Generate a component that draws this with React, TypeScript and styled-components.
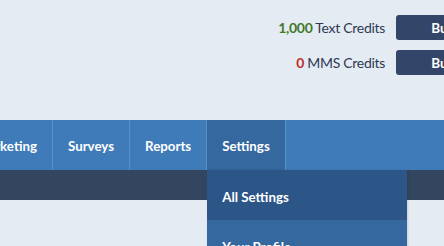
import React from 'react';
import styled, { createGlobalStyle } from 'styled-components';

const GlobalStyle = createGlobalStyle`
  html, body {
    margin: 0;
    padding: 0;
    background: #e5ebf2;
    overflow: hidden;
  }
  body {
    font-family: Lato, 'Open Sans', 'Liberation Sans', sans-serif;
  }
`;

const tabs = ['Marketing', 'Surveys', 'Reports', 'Settings'];
const settingsMenu = ['All Settings', 'Your Profile', 'Billing'];

const App: React.FC = () => {
  return (
    <Page>
      <GlobalStyle />
      <StyledHeader>
        <StyledCreditRow>
          <StyledCreditLabel>
            <StyledAmount color="#3f7a2c">1,000</StyledAmount> Text Credits
          </StyledCreditLabel>
          <StyledBuyButton>Buy Credits</StyledBuyButton>
        </StyledCreditRow>
        <StyledCreditRow>
          <StyledCreditLabel>
            <StyledAmount color="#c0302a">0</StyledAmount> MMS Credits
          </StyledCreditLabel>
          <StyledBuyButton>Buy Credits</StyledBuyButton>
        </StyledCreditRow>
      </StyledHeader>
      <StyledNav>
        <StyledTabList>
          {tabs.map((tab) => (
            <StyledTab key={tab} active={tab === 'Settings'}>
              {tab}
              {tab === 'Settings' ? (
                <StyledDropdown>
                  {settingsMenu.map((item, i) => (
                    <StyledDropdownItem key={item} active={i === 0}>
                      {item}
                    </StyledDropdownItem>
                  ))}
                </StyledDropdown>
              ) : null}
            </StyledTab>
          ))}
        </StyledTabList>
      </StyledNav>
      <StyledSubBar />
    </Page>
  );
};

const Page = styled.div`
  width: 520px;
  height: 246px;
`;

const StyledHeader = styled.div`
  height: 120px;
  box-sizing: border-box;
  padding: 15px 0 0 0;
  display: flex;
  flex-direction: column;
  gap: 10px;
`;

const StyledCreditRow = styled.div`
  display: flex;
  align-items: center;
  justify-content: flex-end;
  gap: 11px;
  width: 536px;
`;

const StyledCreditLabel = styled.div`
  font-size: 14px;
  letter-spacing: -0.3px;
  color: #2d3a52;
  white-space: nowrap;
`;

const StyledAmount = styled.span<{ color: string }>`
  color: ${(props) => props.color};
  font-weight: 700;
`;

const StyledBuyButton = styled.div`
  width: 140px;
  height: 25px;
  border-radius: 3px;
  background: #34456a;
  color: #ffffff;
  font-size: 13.5px;
  font-weight: 700;
  display: flex;
  align-items: center;
  justify-content: center;
`;

const StyledNav = styled.div`
  height: 50px;
  background: #3f7bb9;
`;

const StyledTabList = styled.div`
  display: flex;
  height: 100%;
  margin-left: -39px;
`;

const StyledTab = styled.div<{ active?: boolean }>`
  position: relative;
  display: flex;
  align-items: center;
  padding: 1px 15px 0 15px;
  font-size: 13.3px;
  font-weight: 700;
  color: #ffffff;
  background: ${(props) => (props.active ? '#35689f' : 'transparent')};
  border-right: 1px solid #5b90c7;
`;

const StyledDropdown = styled.div`
  position: absolute;
  top: 50px;
  left: 0;
  width: 200px;
  background: #35689f;
  box-shadow: 1px 0 2px rgba(0, 0, 0, 0.12);
  z-index: 2;
`;

const StyledDropdownItem = styled.div<{ active?: boolean }>`
  height: 50px;
  display: flex;
  align-items: center;
  padding: 4px 15px 0;
  box-sizing: border-box;
  font-size: 13.3px;
  font-weight: 700;
  color: #ffffff;
  background: ${(props) => (props.active ? '#2c5588' : '#35689f')};
`;

const StyledSubBar = styled.div`
  height: 30px;
  background: #34465f;
`;

export default App;
